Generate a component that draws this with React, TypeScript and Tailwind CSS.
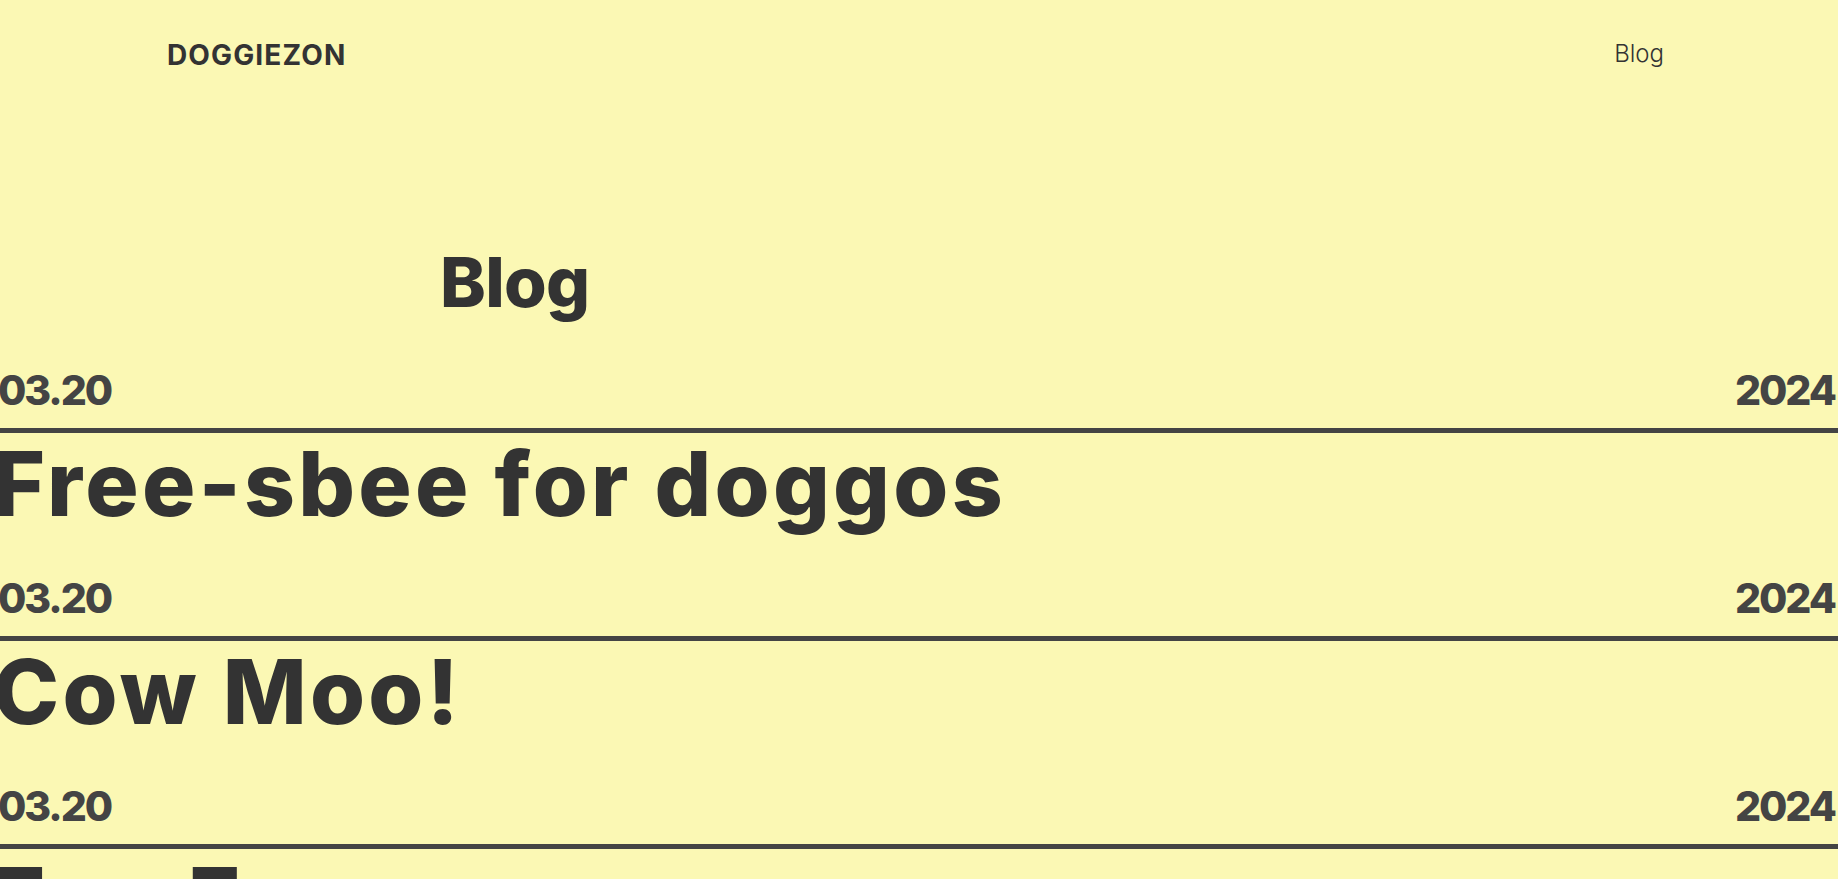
const posts = [
  { date: "03.20", year: "2024", title: "Free-sbee for doggos" },
  { date: "03.20", year: "2024", title: "Cow Moo!" },
  { date: "03.20", year: "2024", title: "Fun Fun" },
];

export default function App() {
  return (
    <div className="min-h-screen bg-[#fbf8b4] text-[#333] font-['Inter',sans-serif] overflow-hidden">
      <header className="h-[110px] flex items-center justify-between pl-[167px] pr-[174px]">
        <a className="text-[28px] font-bold leading-none tracking-[0.04em]">DOGGIEZON</a>
        <nav>
          <a className="text-[24px] font-light leading-none">Blog</a>
        </nav>
      </header>

      <main>
        <h1 className="mt-[132px] ml-[440px] text-[69px] font-extrabold leading-[80px] tracking-[-0.01em]">Blog</h1>

        <ul className="mt-[30px]">
          {posts.map((p, i) => (
            <li key={i} className="mb-[26px]">
              <div className="flex justify-between border-b-[5px] border-[#444] text-[41px] font-extrabold leading-[76px] tracking-[-0.05em] text-[#444]">
                <span className="-ml-[2px]">{p.date}</span>
                <span className="mr-[3px]">{p.year}</span>
              </div>
              <h2 className="-ml-[7px] text-[89px] font-extrabold leading-[101px] tracking-[0.037em] whitespace-nowrap">{p.title}</h2>
            </li>
          ))}
        </ul>
      </main>
    </div>
  );
}
